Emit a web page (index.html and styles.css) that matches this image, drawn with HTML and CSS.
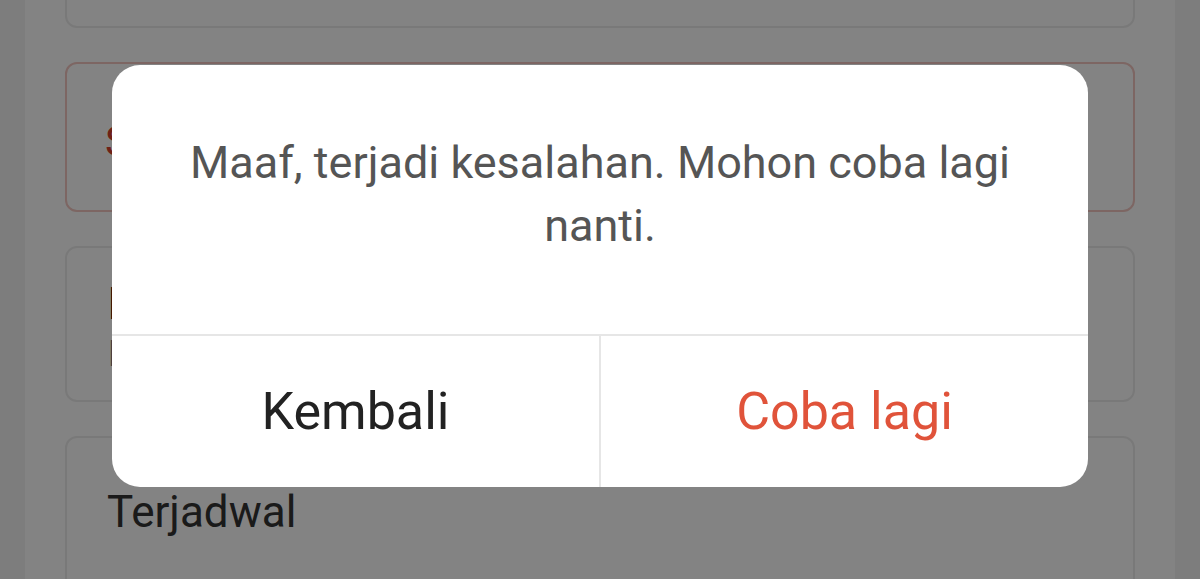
FILE: index.html
```html
<!DOCTYPE html>
<html lang="id">
<head>
<meta charset="utf-8">
<title>Kesalahan</title>
<link rel="stylesheet" href="styles.css">
</head>
<body>
<div class="page">
  <div class="panel">
    <div class="card card-top"></div>
    <div class="card card-alert">
      <div class="alert-text">Sisa</div>
    </div>
    <div class="card card-info">
      <div class="info-title">Pembayaran</div>
      <div class="info-sub">Menunggu</div>
    </div>
    <div class="card card-sched">
      <div class="sched-text">Terjadwal</div>
    </div>
  </div>
</div>
<div class="overlay">
  <div class="dialog">
    <div class="dialog-msg">Maaf, terjadi kesalahan. Mohon coba lagi nanti.</div>
    <div class="dialog-actions">
      <div class="btn btn-back">Kembali</div>
      <div class="btn btn-retry">Coba lagi</div>
    </div>
  </div>
</div>
</body>
</html>
```
FILE: styles.css
```css
* { box-sizing: border-box; }
html, body { margin: 0; padding: 0; }
body {
  width: 1200px;
  height: 579px;
  overflow: hidden;
  background: #f4f4f4;
  font-family: Roboto, "Noto Sans", sans-serif;
  position: relative;
}
.page {
  padding: 0 25px;
  height: 579px;
  overflow: hidden;
}
.panel {
  background: #ffffff;
  height: 640px;
  padding: 0 40px;
  display: flex;
  flex-direction: column;
  gap: 34px;
  margin-top: -60px;
}
.card {
  border: 2px solid #ececec;
  border-radius: 12px;
  background: #ffffff;
  flex-shrink: 0;
}
.card-top { height: 88px; }
.card-alert {
  height: 150px;
  border-color: #f3c6c0;
  padding: 52px 38px 0;
}
.alert-text {
  color: #d8402c;
  font-size: 43px;
  line-height: 50px;
}
.card-info {
  height: 156px;
  padding: 30px 41px 0;
}
.info-title {
  color: #000000;
  font-size: 44px;
  line-height: 52px;
  font-weight: 500;
}
.info-sub {
  color: #777777;
  font-size: 36px;
  line-height: 48px;
}
.card-sched {
  height: 200px;
  padding: 48px 40px 0;
}
.sched-text {
  color: #333333;
  font-size: 44px;
  line-height: 52px;
}
.overlay {
  position: absolute;
  inset: 0;
  background: rgba(0, 0, 0, 0.487);
}
.dialog {
  position: absolute;
  left: 112px;
  top: 65px;
  width: 976px;
  height: 422px;
  background: #ffffff;
  border-radius: 28px;
  display: flex;
  flex-direction: column;
  overflow: hidden;
}
.dialog-msg {
  flex: 1;
  padding: 66px 70px 0;
  text-align: center;
  color: #555555;
  font-size: 45px;
  line-height: 63px;
  border-bottom: 2px solid #e6e6e6;
}
.dialog-actions {
  height: 151px;
  display: flex;
}
.btn {
  flex: 1;
  display: flex;
  align-items: center;
  justify-content: center;
  font-size: 52px;
}
.btn-back {
  color: #222222;
  border-right: 2px solid #e6e6e6;
}
.btn-retry {
  color: #e0533a;
}
```
